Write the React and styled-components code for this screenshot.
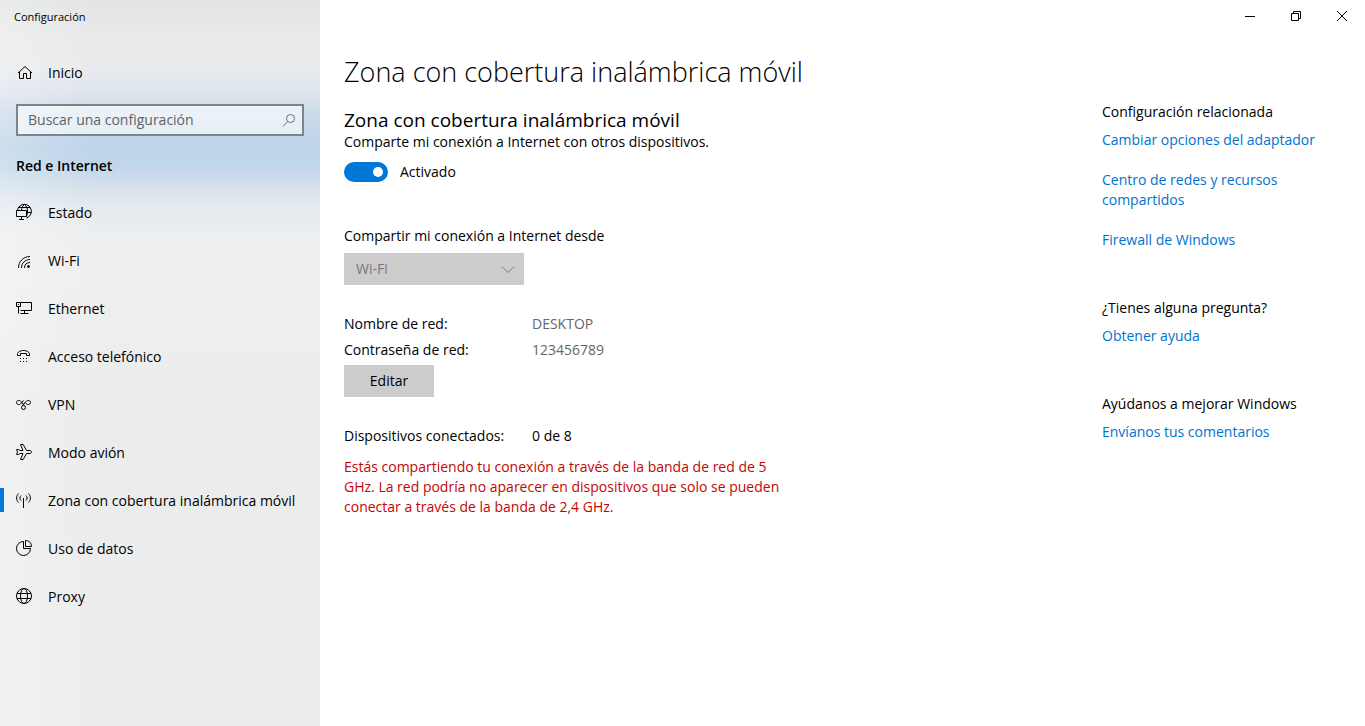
import { useState } from "react";
import styled, { createGlobalStyle } from "styled-components";

const navItems = [
  { label: "Estado", icon: "status" },
  { label: "Wi-Fi", icon: "wifi" },
  { label: "Ethernet", icon: "ethernet" },
  { label: "Acceso telefónico", icon: "phone" },
  { label: "VPN", icon: "vpn" },
  { label: "Modo avión", icon: "plane" },
  { label: "Zona con cobertura inalámbrica móvil", icon: "hotspot" },
  { label: "Uso de datos", icon: "data" },
  { label: "Proxy", icon: "proxy" },
];

const relatedGroups = [
  {
    title: "Configuración relacionada",
    links: [
      "Cambiar opciones del adaptador",
      "Centro de redes y recursos compartidos",
      "Firewall de Windows",
    ],
  },
  { title: "¿Tienes alguna pregunta?", links: ["Obtener ayuda"] },
  { title: "Ayúdanos a mejorar Windows", links: ["Envíanos tus comentarios"] },
];

// 16x16 line icons
const icons = {
  home: (
    <path d="M2 9 9 2.500 16 9M3.500 7.800v6.700h4v-5h3v5h4V7.800" />
  ),
  status: (
    <>
      <path d="M1.500 6A7 7 0 1 1 10.500 14M2 3.500h12M10.500 8.500h4.800M8.500.500C6.500 2 5.500 4 5.500 6.500M8.500.500c2 1.500 3 4 3 6.500s-.5 4.500-1.500 6" />
      <path d="M.5 6.500h10v6H.5zM5.500 12.500v3M3 15.500h5" />
    </>
  ),
  wifi: (
    <>
      <path d="M2.500 16C2.500 9.500 7 4.700 14 4.500M5.500 16c0-5 3.500-8.300 8.500-8.500M8.500 16c0-3.500 2-5.400 5.500-5.500" />
      <circle cx="12.500" cy="14.500" r="1" fill="currentColor" />
    </>
  ),
  ethernet: (
    <>
      <path d="M4.500 2.500h11v8h-11M.5 2.500h4v4H.5zM2.500 6.500v7M8.500 10.500v3M4.500 13.500h8" />
      <path d="M2 4.500h1" />
    </>
  ),
  phone: (
    <>
      <path d="M1.500 7.500V5.500C3 1.500 12 1.500 13.500 5.500v2h-3V5.500h-6v2z" />
      <path d="M4 10.500h1M7 10.500h1M10 10.500h1M4 13.500h1M7 13.500h1M10 13.500h1" />
    </>
  ),
  vpn: (
    <>
      <path d="M5 5.500C4 4 .5 4 .5 6.500S4 9 5 7.500L7.500 4.500M5 5.500l3.500 4M10 5.500C11 4 14.500 4 14.500 6.500S11 9 10 7.500L9 6.500M10 5.500l-3.500 4" />
      <circle cx="7.500" cy="11.500" r="2" />
    </>
  ),
  plane: (
    <path d="M.6 5.500h1.900l1.500 1h3L4.500.5h2.700l3.300 6h3.500c2 .5 2 2.500 0 3h-3.500l-3.300 6H4.500l2.500-6H4l-1.500 1H.6L1.500 8z" />
  ),
  hotspot: (
    <path d="M7.500 6v10M2.500 1.500C0 4 0 8 2.500 10.500M12.500 1.500c2.500 2.500 2.500 6.500 0 9M5 3.500c-1.500 1.500-1.500 3.500 0 5M10 3.500c1.500 1.500 1.500 3.500 0 5" />
  ),
  data: (
    <path d="M7.500 1.500a7 7 0 1 0 7 7h-7zM9.500.5v6h6C15.500 3 13 .5 9.500.5z" />
  ),
  proxy: (
    <>
      <circle cx="8" cy="8" r="7.500" />
      <path d="M1.200 5.500h13.600M1.200 10.500h13.600" />
      <ellipse cx="8" cy="8" rx="3.500" ry="7.500" />
    </>
  ),
  search: (
    <>
      <circle cx="9.500" cy="6.500" r="4" />
      <path d="M2 14.500 6.700 9.500" />
    </>
  ),
  chevron: <path d="m2 5.500 6 6 6-6" />,
  minimize: <path d="M3 8.500h10" />,
  restore: <path d="M3.500 5.500h7v7h-7zM5.500 5.500v-2h7v7h-2" />,
  close: <path d="m3 3 10 10M13 3 3 13" />,
};

const Icon = ({ name }) => (
  <IconSvg viewBox="0 0 16 16" aria-hidden="true">
    {icons[name]}
  </IconSvg>
);

const App = () => {
  const [enabled, setEnabled] = useState(true);

  return (
    <>
      <GlobalStyle />
      <Window>
        <Sidebar>
          <AppTitle>Configuración</AppTitle>
          <NavLink href="#inicio">
            <Icon name="home" />
            <NavText>Inicio</NavText>
          </NavLink>
          <SearchBox>
            <SearchInput
              type="text"
              aria-label="Buscar una configuración"
              placeholder="Buscar una configuración"
            />
            <Icon name="search" />
          </SearchBox>
          <SectionTitle>Red e Internet</SectionTitle>
          <nav>
            {navItems.map((item) => (
              <NavLink
                key={item.icon}
                href={`#${item.icon}`}
                $active={item.icon === "hotspot"}
              >
                <Icon name={item.icon} />
                <NavText>{item.label}</NavText>
              </NavLink>
            ))}
          </nav>
        </Sidebar>

        <Content>
          <WindowControls>
            <ControlButton aria-label="Minimizar">
              <Icon name="minimize" />
            </ControlButton>
            <ControlButton aria-label="Restaurar">
              <Icon name="restore" />
            </ControlButton>
            <ControlButton aria-label="Cerrar">
              <Icon name="close" />
            </ControlButton>
          </WindowControls>

          <Columns>
            <Main>
              <PageTitle>Zona con cobertura inalámbrica móvil</PageTitle>
              <Subtitle>Zona con cobertura inalámbrica móvil</Subtitle>
              <Text>Comparte mi conexión a Internet con otros dispositivos.</Text>
              <ToggleLabel>
                <Toggle
                  type="checkbox"
                  role="switch"
                  checked={enabled}
                  onChange={(e) => setEnabled(e.target.checked)}
                />
                {enabled ? "Activado" : "Desactivado"}
              </ToggleLabel>

              <FieldLabel htmlFor="source">
                Compartir mi conexión a Internet desde
              </FieldLabel>
              <SelectBox>
                <Select id="source" disabled>
                  <option>Wi-Fi</option>
                </Select>
                <Icon name="chevron" />
              </SelectBox>

              <Details>
                <dt>Nombre de red:</dt>
                <Value $muted>DESKTOP</Value>
                <dt>Contraseña de red:</dt>
                <Value $muted>123456789</Value>
              </Details>
              <EditButton>Editar</EditButton>

              <Details>
                <dt>Dispositivos conectados:</dt>
                <Value>0 de 8</Value>
              </Details>
              <Warning>
                Estás compartiendo tu conexión a través de la banda de red de 5
                GHz. La red podría no aparecer en dispositivos que solo se
                pueden conectar a través de la banda de 2,4 GHz.
              </Warning>
            </Main>

            <Related>
              {relatedGroups.map((group) => (
                <section key={group.title}>
                  <RelatedTitle>{group.title}</RelatedTitle>
                  <LinkList>
                    {group.links.map((link) => (
                      <li key={link}>
                        <RelatedLink href="#">{link}</RelatedLink>
                      </li>
                    ))}
                  </LinkList>
                </section>
              ))}
            </Related>
          </Columns>
        </Content>
      </Window>
    </>
  );
};

export default App;

const GlobalStyle = createGlobalStyle`
  * {
    box-sizing: border-box;
  }

  body {
    margin: 0;
    background: #ffffff;
    color: #000000;
    font-family: "Segoe UI", "Open Sans", "Noto Sans", sans-serif;
    font-size: 14px;
    line-height: 20px;
  }

  button, input, select {
    font: inherit;
    color: inherit;
  }
`;

const IconSvg = styled.svg`
  width: 16px;
  height: 16px;
  flex: none;
  overflow: visible;
  fill: none;
  stroke: currentColor;
  stroke-width: 1;
`;

const Window = styled.div`
  display: flex;
  min-height: 100vh;
`;

const Sidebar = styled.aside`
  width: 320px;
  flex: none;
  background:
    linear-gradient(90deg, rgba(255, 255, 255, 0.25), transparent 30%),
    linear-gradient(
      180deg,
      #e3e4e4 0px,
      #e9eaea 40px,
      #e9ebed 68px,
      #dfe5ec 90px,
      #ccdcea 112px,
      #bdd4e9 145px,
      #c0d6e9 165px,
      #d3e0eb 185px,
      #e4e9ee 205px,
      #eceef0 230px,
      #efefef 270px,
      #ebecec 420px,
      #ededed 726px
    );
`;

const AppTitle = styled.div`
  height: 48px;
  padding: 8px 14px;
  font-size: 11px;
  line-height: 18px;
`;

const NavLink = styled.a`
  display: flex;
  align-items: center;
  gap: 16px;
  height: 48px;
  padding: 0 16px;
  color: #000000;
  text-decoration: none;
  white-space: nowrap;
  background: linear-gradient(#0078d7, #0078d7) no-repeat left center;
  background-size: ${(props) => (props.$active ? "4px 24px" : "0 0")};
`;

const NavText = styled.span`
  padding-top: 2px;
`;

const SearchBox = styled.div`
  display: flex;
  align-items: center;
  height: 32px;
  margin: 8px 16px 0;
  padding: 0 5px 0 10px;
  border: 2px solid #7c858c;
  background: rgba(255, 255, 255, 0.6);
  color: #6a7076;
`;

const SearchInput = styled.input`
  flex: 1;
  min-width: 0;
  padding: 0;
  border: none;
  outline: none;
  background: transparent;

  &::placeholder {
    color: #5d646b;
    opacity: 1;
  }
`;

const SectionTitle = styled.h2`
  margin: 20px 16px 12px;
  font-size: 14px;
  font-weight: 600;
  line-height: 20px;
`;

const Content = styled.div`
  flex: 1;
  min-width: 0;
`;

const WindowControls = styled.div`
  display: flex;
  justify-content: flex-end;
  height: 32px;
`;

const ControlButton = styled.button`
  display: flex;
  align-items: center;
  justify-content: center;
  width: 46px;
  padding: 0;
  border: none;
  background: transparent;
`;

const Columns = styled.div`
  display: flex;
  justify-content: space-between;
  gap: 24px;
  padding: 22px 24px 24px;
`;

const Main = styled.main`
  width: 450px;
`;

const PageTitle = styled.h1`
  margin: 0 0 18px;
  font-size: 27px;
  font-weight: 300;
  line-height: 36px;
  white-space: nowrap;
`;

const Subtitle = styled.h2`
  margin: 0;
  font-size: 19px;
  font-weight: 400;
  line-height: 24px;
`;

const Text = styled.p`
  margin: 0;
`;

const ToggleLabel = styled.label`
  display: flex;
  align-items: center;
  gap: 12px;
  margin: 10px 0 44px;
`;

const Toggle = styled.input`
  display: flex;
  align-items: center;
  justify-content: ${(props) => (props.checked ? "flex-end" : "flex-start")};
  appearance: none;
  width: 44px;
  height: 20px;
  margin: 0;
  padding: 0 5px;
  border-radius: 10px;
  background: ${(props) => (props.checked ? "#0078d7" : "#999999")};

  &::before {
    content: "";
    width: 10px;
    height: 10px;
    border-radius: 50%;
    background: #ffffff;
  }
`;

const FieldLabel = styled.label`
  display: block;
  margin-bottom: 7px;
`;

const SelectBox = styled.div`
  display: grid;
  align-items: center;
  width: 180px;
  height: 32px;
  margin-bottom: 29px;
  background: #cccccc;
  color: #7a7a7a;

  > * {
    grid-area: 1 / 1;
  }

  > svg {
    justify-self: end;
    margin-right: 8px;
    pointer-events: none;
  }
`;

const Select = styled.select`
  appearance: none;
  width: 100%;
  height: 32px;
  padding: 0 12px;
  border: none;
  border-radius: 0;
  background: transparent;
  opacity: 1;
`;

const Details = styled.dl`
  display: grid;
  grid-template-columns: 188px 1fr;
  row-gap: 6px;
  margin: 0;
`;

const Value = styled.dd`
  margin: 0;
  color: ${(props) => (props.$muted ? "#666666" : "#000000")};
`;

const EditButton = styled.button`
  display: block;
  width: 90px;
  height: 32px;
  margin: 5px 0 29px;
  padding: 0;
  border: none;
  background: #cccccc;
`;

const Warning = styled.p`
  margin: 11px 0 0;
  color: #c50500;
`;

const Related = styled.aside`
  display: flex;
  flex-direction: column;
  gap: 48px;
  width: 239px;
  flex: none;
  padding-top: 48px;
`;

const RelatedTitle = styled.h3`
  margin: 0 0 8px;
  font-size: 14px;
  font-weight: 400;
  line-height: 20px;
`;

const LinkList = styled.ul`
  display: flex;
  flex-direction: column;
  gap: 20px;
  margin: 0;
  padding: 0;
  list-style: none;
`;

const RelatedLink = styled.a`
  color: #0072cf;
  text-decoration: none;
`;
